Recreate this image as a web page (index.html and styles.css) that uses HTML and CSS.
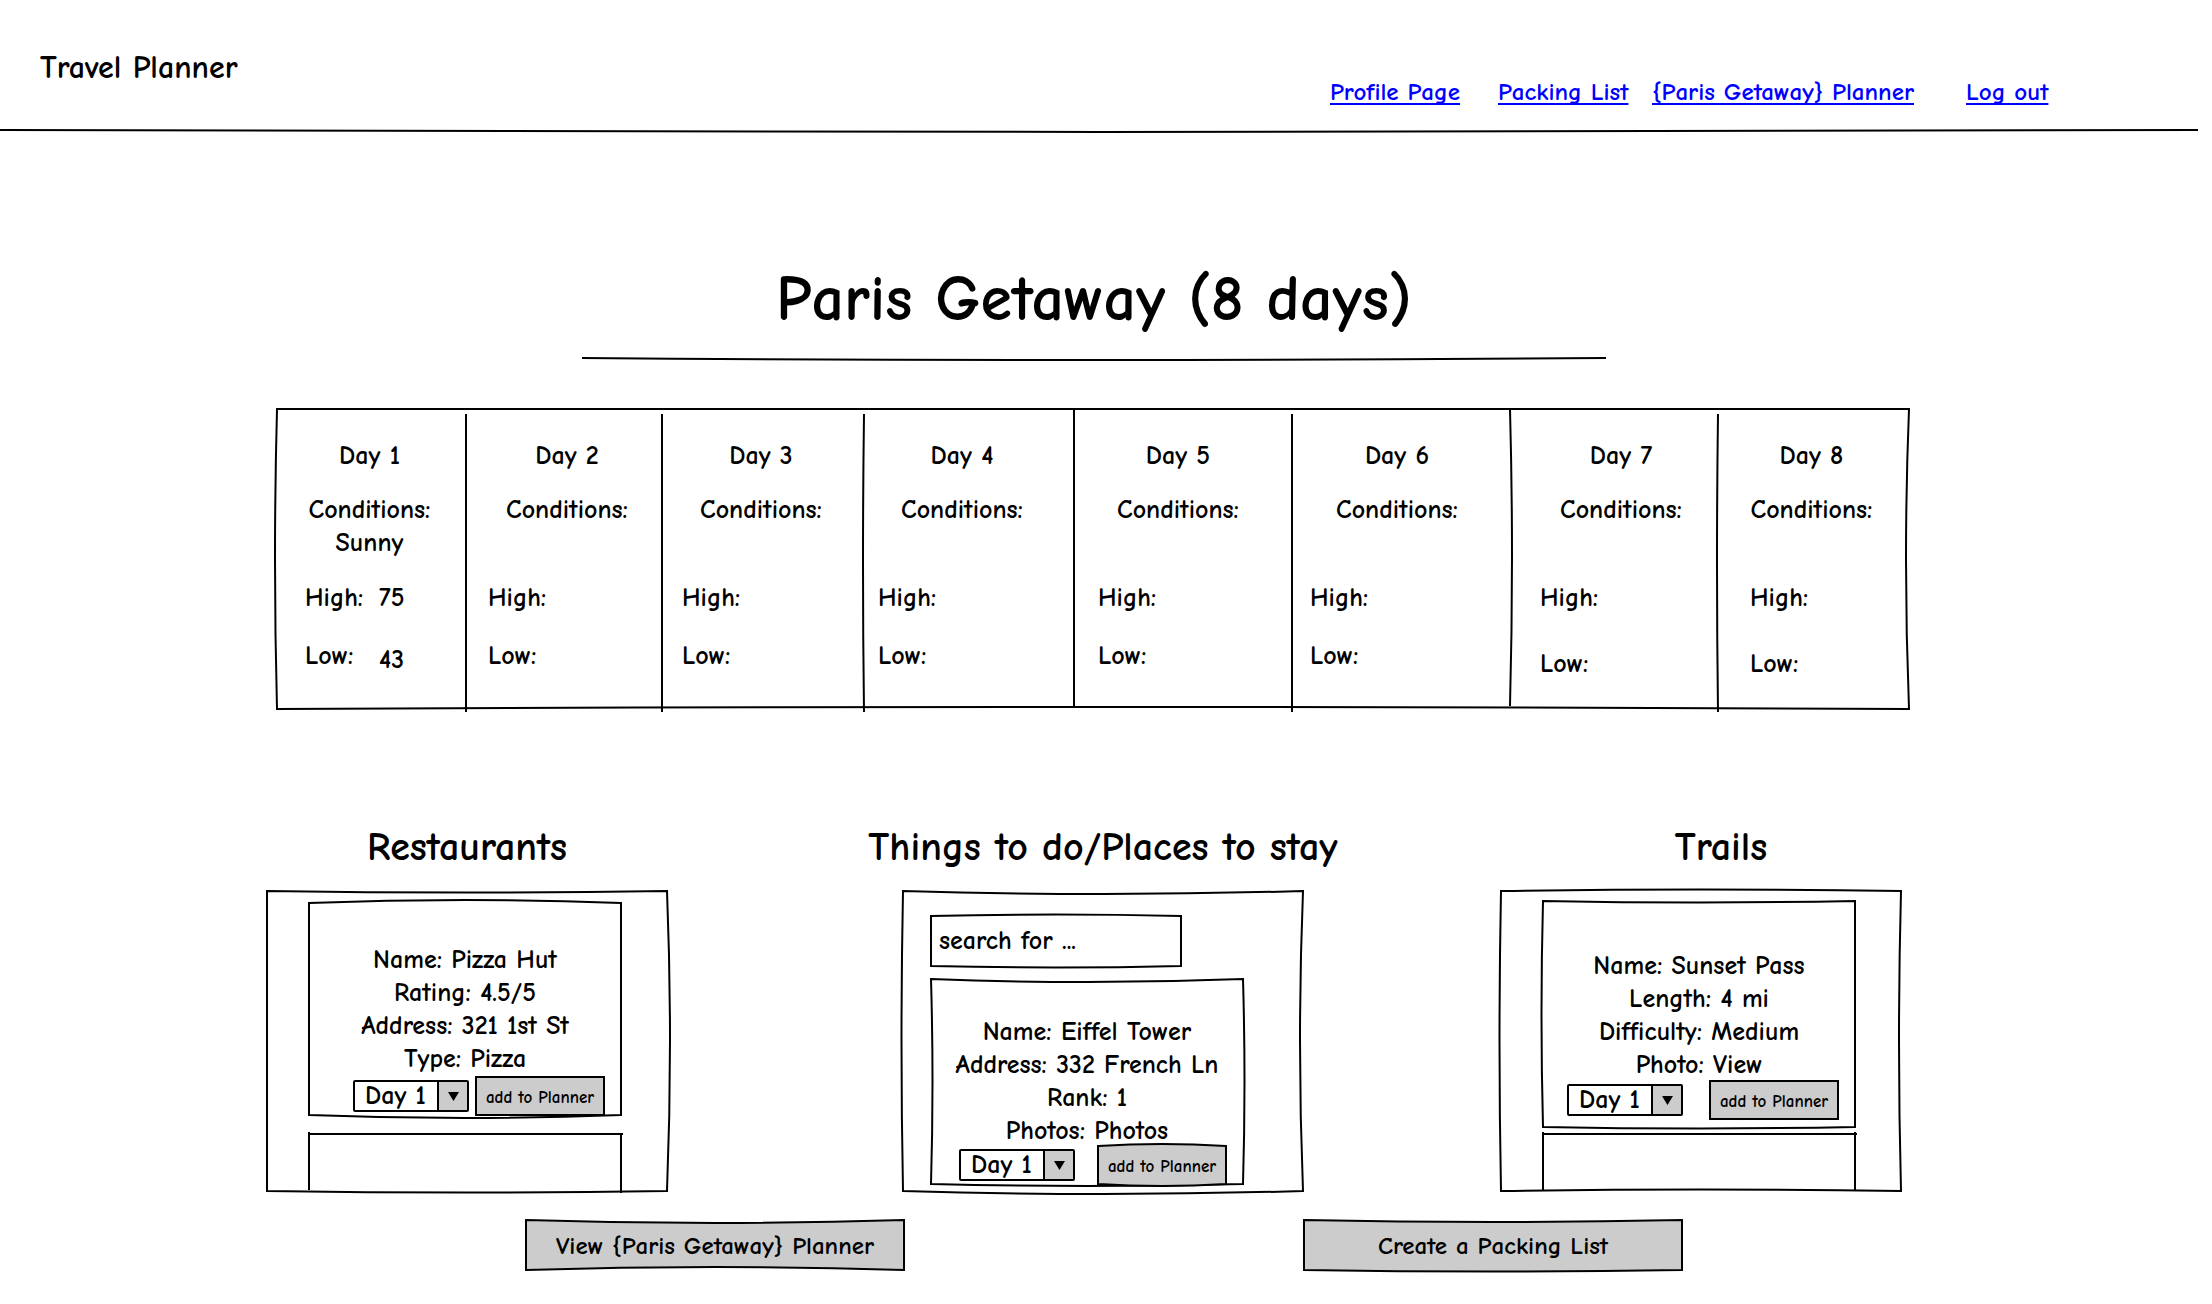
FILE: index.html
```
<!DOCTYPE html>
<html lang="en">
<head>
<meta charset="utf-8">
<title>Travel Planner</title>
<link rel="stylesheet" href="styles.css">
</head>
<body>
<header class="site-header">
  <div class="brand">Travel Planner</div>
  <nav class="site-nav">
    <a href="#profile">Profile Page</a>
    <a href="#packing">Packing List</a>
    <a href="#planner">{Paris Getaway} Planner</a>
    <a href="#logout">Log out</a>
  </nav>
  <svg class="rule" viewBox="0 0 2212 2" preserveAspectRatio="none" aria-hidden="true"><path d="M0 0Q1106 4 2212 0"/></svg>
</header>

<main>
  <div class="trip-title">
    <h1>Paris Getaway (8 days)</h1>
    <svg class="rule" viewBox="0 0 1024 2" preserveAspectRatio="none" aria-hidden="true"><path d="M0 0Q512 4 1024 0"/></svg>
  </div>

  <section class="forecast" aria-label="Forecast">
    <svg class="frame" viewBox="0 0 1632 300" preserveAspectRatio="none" aria-hidden="true">
      <path d="M0 0H1632Q1626 150 1632 300Q816 296 0 300Q-4 150 0 0Z"/>
      <path d="M189 5V303M385 5V303M587 5Q585 154 587 303M797 0V297M1015 5V303M1233 0Q1237 148 1233 297M1441 5Q1439 154 1441 303"/>
    </svg>
    <article class="day">
      <h2>Day 1</h2>
      <p class="conditions">Conditions:<br>Sunny</p>
      <dl><dt>High:</dt><dd>75</dd><dt>Low:</dt><dd>43</dd></dl>
    </article>
    <article class="day">
      <h2>Day 2</h2>
      <p class="conditions">Conditions:</p>
      <dl><dt>High:</dt><dd></dd><dt>Low:</dt><dd></dd></dl>
    </article>
    <article class="day">
      <h2>Day 3</h2>
      <p class="conditions">Conditions:</p>
      <dl><dt>High:</dt><dd></dd><dt>Low:</dt><dd></dd></dl>
    </article>
    <article class="day">
      <h2>Day 4</h2>
      <p class="conditions">Conditions:</p>
      <dl><dt>High:</dt><dd></dd><dt>Low:</dt><dd></dd></dl>
    </article>
    <article class="day">
      <h2>Day 5</h2>
      <p class="conditions">Conditions:</p>
      <dl><dt>High:</dt><dd></dd><dt>Low:</dt><dd></dd></dl>
    </article>
    <article class="day">
      <h2>Day 6</h2>
      <p class="conditions">Conditions:</p>
      <dl><dt>High:</dt><dd></dd><dt>Low:</dt><dd></dd></dl>
    </article>
    <article class="day">
      <h2>Day 7</h2>
      <p class="conditions">Conditions:</p>
      <dl><dt>High:</dt><dd></dd><dt>Low:</dt><dd></dd></dl>
    </article>
    <article class="day">
      <h2>Day 8</h2>
      <p class="conditions">Conditions:</p>
      <dl><dt>High:</dt><dd></dd><dt>Low:</dt><dd></dd></dl>
    </article>
  </section>

  <div class="columns">
    <section class="column restaurants">
      <h2>Restaurants</h2>
      <div class="panel">
        <svg class="frame" viewBox="0 0 400 300" preserveAspectRatio="none" aria-hidden="true"><path d="M0 0Q200 3 400 0Q406 150 400 300Q200 303 0 300Z"/></svg>
        <article class="card">
          <svg class="frame" viewBox="0 0 312 212" preserveAspectRatio="none" aria-hidden="true"><path d="M0 0Q156 -6 312 0V212Q156 218 0 212Z"/></svg>
          <p>Name: Pizza Hut<br>Rating: 4.5/5<br>Address: 321 1st St<br>Type: Pizza</p>
          <form class="actions">
            <span class="picker">
              <select aria-label="Day for Pizza Hut"><option>Day 1</option><option>Day 2</option><option>Day 3</option></select>
              <svg viewBox="0 0 28 28" aria-hidden="true"><path d="M9 10H20L14.500 19Z"/></svg>
            </span>
            <button type="button" class="add">
              <svg class="frame" viewBox="0 0 128 38" preserveAspectRatio="none" aria-hidden="true"><path d="M0 0H128V38H0Z"/></svg>
              add to Planner
            </button>
          </form>
        </article>
        <div class="next-card">
          <svg class="frame" viewBox="0 0 312 58" preserveAspectRatio="none" aria-hidden="true"><path d="M0 -2V57M0 0H314M312 0V60"/></svg>
        </div>
      </div>
    </section>

    <section class="column places">
      <h2>Things to do/Places to stay</h2>
      <div class="panel">
        <svg class="frame" viewBox="0 0 400 300" preserveAspectRatio="none" aria-hidden="true"><path d="M0 0Q200 6 400 0Q394 150 400 300Q200 306 0 300Q-3 150 0 0Z"/></svg>
        <div class="search">
          <svg class="frame" viewBox="0 0 250 50" preserveAspectRatio="none" aria-hidden="true"><path d="M0 0Q125 -3 250 0V50Q125 53 0 50Z"/></svg>
          <input type="text" aria-label="Search places" placeholder="search for ...">
        </div>
        <article class="card">
          <svg class="frame" viewBox="0 0 312 204" preserveAspectRatio="none" aria-hidden="true"><path d="M0 0Q156 6 312 0Q315 102 312 204Q156 208 0 204Q3 102 0 0Z"/></svg>
          <p>Name: Eiffel Tower<br>Address: 332 French Ln<br>Rank: 1<br>Photos: Photos</p>
          <form class="actions">
            <span class="picker">
              <select aria-label="Day for Eiffel Tower"><option>Day 1</option><option>Day 2</option><option>Day 3</option></select>
              <svg viewBox="0 0 28 28" aria-hidden="true"><path d="M9 10H20L14.500 19Z"/></svg>
            </span>
            <button type="button" class="add">
              <svg class="frame" viewBox="0 0 128 38" preserveAspectRatio="none" aria-hidden="true"><path d="M0 0Q64 -4 128 0V38Q64 42 0 38Z"/></svg>
              add to Planner
            </button>
          </form>
        </article>
      </div>
    </section>

    <section class="column trails">
      <h2>Trails</h2>
      <div class="panel">
        <svg class="frame" viewBox="0 0 400 300" preserveAspectRatio="none" aria-hidden="true"><path d="M0 0Q200 -3 400 0Q396 150 400 300Q200 297 0 300Q-3 150 0 0Z"/></svg>
        <article class="card">
          <svg class="frame" viewBox="0 0 312 226" preserveAspectRatio="none" aria-hidden="true"><path d="M0 0Q156 3 312 0V226Q156 229 0 226Q-3 113 0 0Z"/></svg>
          <p>Name: Sunset Pass<br>Length: 4 mi<br>Difficulty: Medium<br>Photo: View</p>
          <form class="actions">
            <span class="picker">
              <select aria-label="Day for Sunset Pass"><option>Day 1</option><option>Day 2</option><option>Day 3</option></select>
              <svg viewBox="0 0 28 28" aria-hidden="true"><path d="M9 10H20L14.500 19Z"/></svg>
            </span>
            <button type="button" class="add">
              <svg class="frame" viewBox="0 0 128 38" preserveAspectRatio="none" aria-hidden="true"><path d="M0 0H128V38H0Z"/></svg>
              add to Planner
            </button>
          </form>
        </article>
        <div class="next-card">
          <svg class="frame" viewBox="0 0 312 58" preserveAspectRatio="none" aria-hidden="true"><path d="M0 -2V57M0 0H314M312 -2V57"/></svg>
        </div>
      </div>
    </section>
  </div>

  <div class="page-actions">
    <button type="button">
      <svg class="frame" viewBox="0 0 380 50" preserveAspectRatio="none" aria-hidden="true"><path d="M0 0Q190 6 380 0V50Q190 44 0 50Z"/></svg>
      View {Paris Getaway} Planner
    </button>
    <button type="button">
      <svg class="frame" viewBox="0 0 380 50" preserveAspectRatio="none" aria-hidden="true"><path d="M0 0Q190 4 380 0V50Q190 53 0 50Z"/></svg>
      Create a Packing List
    </button>
  </div>
</main>
</body>
</html>
```
FILE: styles.css
```
* {
  box-sizing: border-box;
}

body {
  margin: 0;
  background: #fff;
  color: #000;
  font-family: "Comic Neue", "Open Sans", "Noto Sans", sans-serif;
  font-size: 26px;
  font-weight: 700;
  line-height: 33px;
}

h1,
h2,
p,
dl,
dd {
  margin: 0;
}

h1,
h2 {
  font-weight: inherit;
  white-space: nowrap;
}

button,
select,
input {
  font: inherit;
  color: inherit;
}

/* Hand-drawn outlines, stretched over the box they belong to */
.frame {
  position: absolute;
  inset: 0;
  z-index: -1;
  width: 100%;
  height: 100%;
  overflow: visible;
}

.rule {
  display: block;
  width: 100%;
  height: 2px;
  overflow: visible;
}

.frame path,
.rule path {
  fill: none;
  stroke: #000;
  stroke-width: 2px;
  vector-effect: non-scaling-stroke;
}

/* Header */
.site-header {
  display: grid;
  grid-template-columns: 1fr auto;
  margin-right: 14px;
  padding-top: 48px;
}

.brand {
  padding-left: 40px;
  font-size: 32px;
  line-height: 40px;
}

.site-nav {
  display: grid;
  grid-template-columns: 168px 154px 314px 82px;
  padding: 27px 150px 22px 0;
  font-size: 25px;
  white-space: nowrap;
}

.site-nav a {
  color: #00f;
  text-decoration-thickness: 2px;
  text-underline-offset: 3px;
  text-decoration-skip-ink: none;
}

.site-header .rule {
  grid-column: 1 / -1;
}

/* Trip title */
.trip-title {
  display: grid;
  grid-template-columns: minmax(0, 1024px);
  justify-content: center;
  margin-top: 127px;
  padding-right: 24px;
  text-align: center;
}

h1 {
  font-size: 64px;
  line-height: 80px;
  padding-bottom: 19px;
}

/* Forecast */
.forecast {
  position: relative;
  isolation: isolate;
  display: grid;
  grid-template-columns: 189fr 196fr 202fr 210fr 218fr 218fr 208fr 191fr;
  min-height: 300px;
  margin: 49px 303px 0 277px;
}

.day {
  display: grid;
  grid-template-rows: 54px 88px auto;
  align-content: start;
  padding-top: 31px;
  text-align: center;
}

.day h2 {
  font-size: 26px;
}

.day:nth-child(2) { padding-left: 28px; padding-right: 32px; }
.day:nth-child(3) { padding-left: 22px; padding-right: 16px; }
.day:nth-child(4) { padding-left: 20px; padding-right: 24px; }
.day:nth-child(5) { padding-left: 14px; padding-right: 28px; }
.day:nth-child(6) { padding-left: 24px; padding-right: 34px; }
.day:nth-child(7) { padding-left: 18px; padding-right: 26px; }
.day:nth-child(8) { padding-left: 30px; padding-right: 16px; }
.day:nth-child(9) { padding-left: 32px; padding-right: 36px; }

.day dl {
  display: grid;
  grid-template-columns: 74px 1fr;
  row-gap: 25px;
  text-align: left;
}

.day:nth-child(n + 8) dl {
  row-gap: 33px;
}

.day dd:last-child {
  padding-top: 4px;
}

/* Suggestions */
.columns {
  display: grid;
  grid-template-columns:
    minmax(0, 400fr) minmax(0, 236fr) minmax(0, 400fr)
    minmax(0, 198fr) minmax(0, 400fr);
  margin: 113px 311px 0 267px;
}

.places {
  grid-column: 3;
}

.trails {
  grid-column: 5;
}

.column h2 {
  display: flex;
  justify-content: center;
  font-size: 40px;
  line-height: 50px;
  padding-bottom: 19px;
}

.trails h2 {
  padding-left: 40px;
}

.panel {
  position: relative;
  isolation: isolate;
  display: flex;
  flex-direction: column;
  min-height: 300px;
  padding: 12px 46px 0 42px;
}

.places .panel {
  padding: 25px 60px 0 28px;
}

.trails .panel {
  padding-top: 10px;
}

.card {
  position: relative;
  isolation: isolate;
  min-height: 212px;
  padding-top: 41px;
  text-align: center;
  white-space: nowrap;
}

.places .card {
  min-height: 204px;
  margin-top: 13px;
  padding-top: 37px;
}

.trails .card {
  min-height: 226px;
  padding-top: 49px;
}

.actions {
  display: flex;
  align-items: center;
  gap: 7px;
  margin-top: 1px;
  padding-left: 44px;
}

.places .actions {
  gap: 23px;
  margin-top: -2px;
  padding-left: 28px;
}

.trails .actions {
  gap: 27px;
  margin-top: -1px;
  padding-left: 24px;
}

.picker {
  position: relative;
  display: block;
  flex: none;
  width: 116px;
  height: 32px;
}

.picker select {
  width: 100%;
  height: 100%;
  padding: 0 0 0 10px;
  border: 2px solid #000;
  border-radius: 2px;
  background: #fff;
  appearance: none;
  line-height: 28px;
}

.picker svg {
  position: absolute;
  top: 2px;
  right: 2px;
  width: 30px;
  height: 28px;
  border-left: 2px solid #000;
  background: #ccc;
  pointer-events: none;
}

.add {
  position: relative;
  isolation: isolate;
  flex: none;
  width: 128px;
  height: 38px;
  padding: 4px 0 0;
  border: 0;
  background: none;
  font-size: 17px;
  line-height: 20px;
}

button .frame path {
  fill: #ccc;
}

.next-card {
  position: relative;
  isolation: isolate;
  flex: 1;
  margin-top: 19px;
}

.trails .next-card {
  margin-top: 7px;
}

.search {
  position: relative;
  isolation: isolate;
  width: 250px;
  height: 50px;
}

.search input {
  width: 100%;
  height: 100%;
  padding: 0 8px;
  border: 0;
  background: none;
}

.search input::placeholder {
  color: #000;
  opacity: 1;
}

/* Page actions */
.page-actions {
  display: flex;
  justify-content: center;
  gap: 400px;
  margin-top: 29px;
  padding: 0 4px 32px 0;
}

.page-actions button {
  position: relative;
  isolation: isolate;
  width: 378px;
  height: 50px;
  padding: 0;
  border: 0;
  background: none;
  font-size: 25px;
}
```
